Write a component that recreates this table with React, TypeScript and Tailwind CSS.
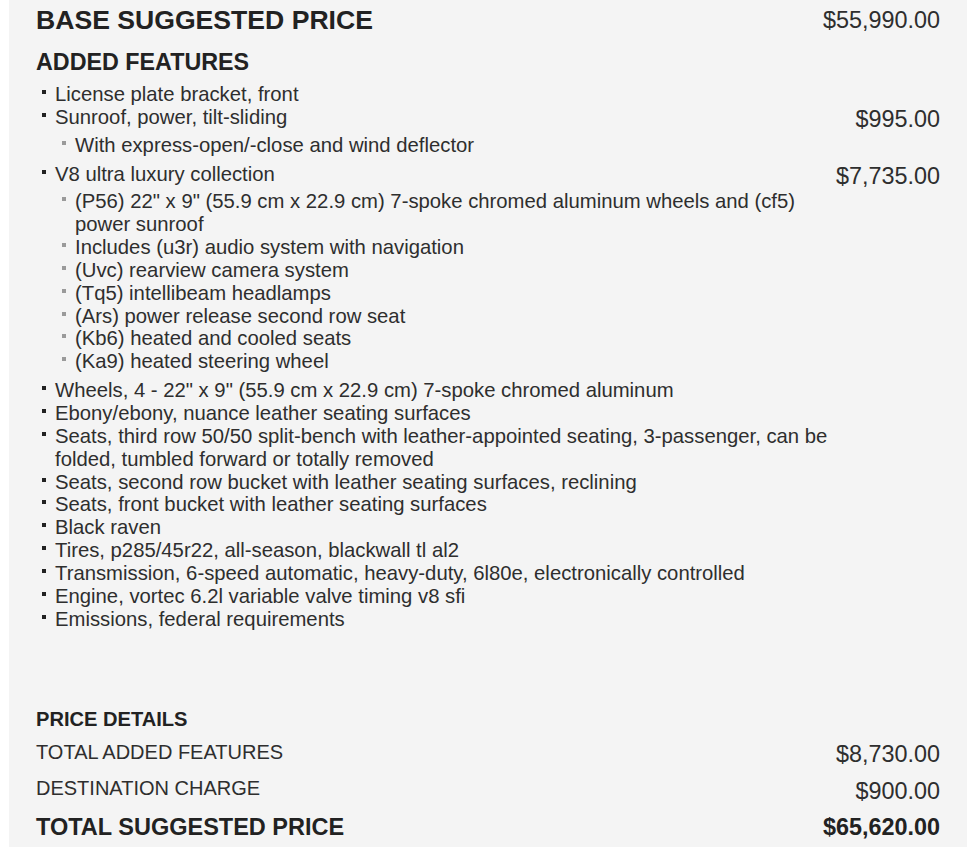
import React from "react"

type Item = {
  text: string
  price?: string
  sub?: string[]
}

const items: Item[] = [
  { text: "License plate bracket, front" },
  { text: "Sunroof, power, tilt-sliding", price: "$995.00", sub: ["With express-open/-close and wind deflector"] },
  {
    text: "V8 ultra luxury collection",
    price: "$7,735.00",
    sub: [
      "(P56) 22\" x 9\" (55.9 cm x 22.9 cm) 7-spoke chromed aluminum wheels and (cf5) power sunroof",
      "Includes (u3r) audio system with navigation",
      "(Uvc) rearview camera system",
      "(Tq5) intellibeam headlamps",
      "(Ars) power release second row seat",
      "(Kb6) heated and cooled seats",
      "(Ka9) heated steering wheel",
    ],
  },
  { text: "Wheels, 4 - 22\" x 9\" (55.9 cm x 22.9 cm) 7-spoke chromed aluminum" },
  { text: "Ebony/ebony, nuance leather seating surfaces" },
  { text: "Seats, third row 50/50 split-bench with leather-appointed seating, 3-passenger, can be folded, tumbled forward or totally removed" },
  { text: "Seats, second row bucket with leather seating surfaces, reclining" },
  { text: "Seats, front bucket with leather seating surfaces" },
  { text: "Black raven" },
  { text: "Tires, p285/45r22, all-season, blackwall tl al2" },
  { text: "Transmission, 6-speed automatic, heavy-duty, 6l80e, electronically controlled" },
  { text: "Engine, vortec 6.2l variable valve timing v8 sfi" },
  { text: "Emissions, federal requirements" },
]

function Bullet({ light }: { light?: boolean }) {
  return (
    <span className="w-[19px] shrink-0 pl-[6px] pt-[7px]">
      <span className={`block w-[4px] h-[4px] ${light ? "bg-[#9a9a9a]" : "bg-[#222]"}`} />
    </span>
  )
}

export default function App() {
  return (
    <div className="min-h-[847px] bg-white pl-[9px] font-['Liberation_Sans',Arial,sans-serif]">
      <div className="min-h-[847px] bg-[#f4f4f4] pl-[27px] pr-[27px] pt-[5px] pb-[6px] text-[#2e2e2e]">
        <div className="flex justify-between items-center">
          <h1 className="text-[26.6px] leading-[30px] font-bold text-[#222]">BASE SUGGESTED PRICE</h1>
          <div className="text-[23.4px] leading-[28px]">$55,990.00</div>
        </div>

        <h2 className="mt-[14px] text-[23.3px] leading-[27px] font-bold text-[#222]">ADDED FEATURES</h2>

        <ul className="mt-[7px]">
          {items.map((item) => (
            <li key={item.text} className={`flex ${item.sub ? "mb-[6px]" : ""}`}>
              <div className="flex-1 min-w-0">
                <div className="flex text-[20.3px] leading-[22.85px]">
                  <Bullet />
                  <span>{item.text}</span>
                </div>
                {item.sub && (
                  <ul className="mt-[5px] pl-[20px]">
                    {item.sub.map((s) => (
                      <li key={s} className="flex text-[20.3px] leading-[22.85px]">
                        <Bullet light />
                        <span>{s}</span>
                      </li>
                    ))}
                  </ul>
                )}
              </div>
              <div className="w-[96px] shrink-0 whitespace-nowrap flex justify-end text-[23.4px] leading-[27px]">{item.price}</div>
            </li>
          ))}
        </ul>

        <div className="mt-[77px]">
          <h3 className="text-[20.1px] leading-[24px] font-bold text-[#222]">PRICE DETAILS</h3>
          <div className="mt-[9px] flex justify-between items-start">
            <span className="text-[20px] leading-[24px]">TOTAL ADDED FEATURES</span>
            <span className="text-[23.4px] leading-[28px]">$8,730.00</span>
          </div>
          <div className="mt-[8px] flex justify-between items-start">
            <span className="text-[20px] leading-[24px]">DESTINATION CHARGE</span>
            <span className="text-[23.4px] leading-[30px]">$900.00</span>
          </div>
          <div className="mt-[7px] flex justify-between items-center">
            <span className="text-[23.5px] leading-[28px] font-bold text-[#222]">TOTAL SUGGESTED PRICE</span>
            <span className="text-[23.4px] leading-[28px] font-bold text-[#222]">$65,620.00</span>
          </div>
        </div>
      </div>
    </div>
  )
}
